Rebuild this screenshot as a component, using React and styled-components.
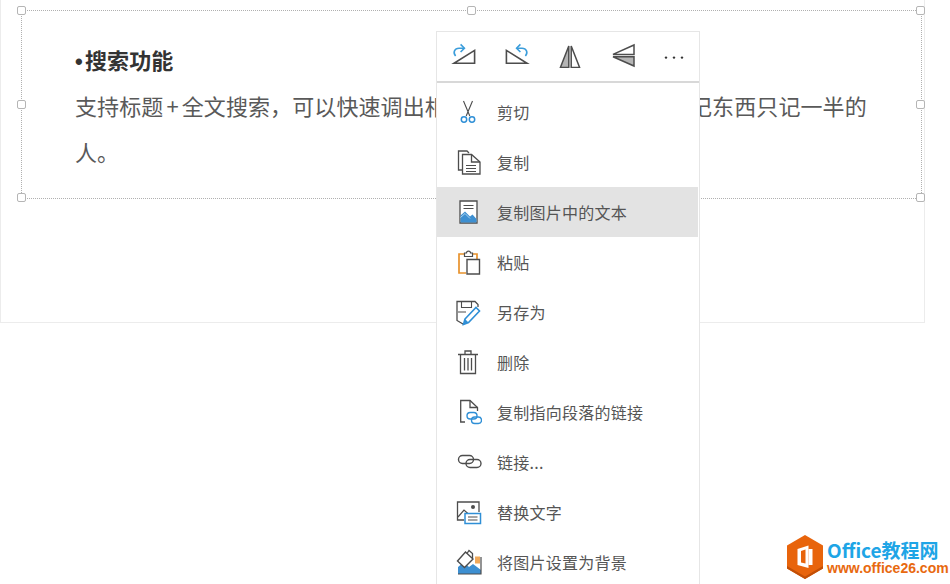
import React from "react";
import styled, { createGlobalStyle } from "styled-components";

const Global = createGlobalStyle`
  html, body {
    margin: 0;
    padding: 0;
    height: 100%;
    overflow: hidden;
    background: #fff;
  }
`;

const BLUE = "#2f8fd6";
const DARK = "#4d4d4d";

const Rotate = ({ flip }) => (
  <svg width="28" height="28" viewBox="0 0 28 28" fill="none" style={flip ? { transform: "scaleX(-1)" } : undefined}>
    <path d="M4 23.3H24.6V10.4Z" stroke={DARK} strokeWidth="1.6" fill="#fff" />
    <path d="M5.6 16C2.6 12.5 4.6 8.2 9 8.2H14.2" stroke="#3b9ddb" strokeWidth="1.6" />
    <path d="M10.6 4.4L14.4 8.2L10.6 12" stroke="#3b9ddb" strokeWidth="1.6" />
  </svg>
);

const FlipV = () => (
  <svg width="28" height="28" viewBox="0 0 28 28" fill="none">
    <path d="M12.8 6V27.5H4.4Z" fill="#b5b5b5" stroke={DARK} strokeWidth="1.5" />
    <path d="M15.2 6V27.5H23.6Z" fill="#fff" stroke={DARK} strokeWidth="1.5" />
  </svg>
);

const FlipH = () => (
  <svg width="28" height="28" viewBox="0 0 28 28" fill="none">
    <path d="M25 5V14.4H4Z" fill="#fff" stroke={DARK} strokeWidth="1.5" />
    <path d="M25 26V16.8H4Z" fill="#b5b5b5" stroke={DARK} strokeWidth="1.5" />
  </svg>
);

const Dots = () => (
  <svg width="28" height="28" viewBox="0 0 28 28" fill="#333">
    <circle cx="6" cy="17.6" r="1.2" />
    <circle cx="14" cy="17.6" r="1.2" />
    <circle cx="22" cy="17.6" r="1.2" />
  </svg>
);

const Scissors = () => (
  <svg width="28" height="28" viewBox="0 0 28 28" fill="none">
    <path d="M9.5 3L15.8 18M18.5 3L12.2 18" stroke={DARK} strokeWidth="1.1" />
    <circle cx="10" cy="21.5" r="2.7" stroke={BLUE} strokeWidth="1.5" />
    <circle cx="18" cy="21.5" r="2.7" stroke={BLUE} strokeWidth="1.5" />
  </svg>
);

const Copy = () => (
  <svg width="28" height="28" viewBox="0 0 28 28" fill="none" stroke={DARK} strokeWidth="1.3">
    <path d="M8 22H4.5V3H13L15 5" />
    <path d="M8.5 6.5H17.5L26 14V26H8.5Z" fill="#fff" />
    <path d="M17.5 6.5V14H26" />
    <path d="M12 17.5H22M12 20.5H22M12 23.5H22" strokeWidth="1" />
  </svg>
);

const PictureText = () => (
  <svg width="28" height="28" viewBox="0 0 28 28" fill="none">
    <path d="M6 3H23V25H6Z" fill="#fff" stroke={DARK} strokeWidth="1.3" />
    <path d="M9.5 7.5H19.5M9.5 10.5H19.5" stroke={DARK} strokeWidth="1" />
    <path d="M6.5 24.5V17.5L11 13.5L16 18.5L18.5 16.5L22.5 21V24.5Z" fill="#3d8fd1" />
    <path d="M6.5 19.5L11 15.5L16 20.5" stroke="#a9d2ef" strokeWidth="1" />
  </svg>
);

const Paste = () => (
  <svg width="28" height="28" viewBox="0 0 28 28" fill="none">
    <path d="M10 6H5V25H12M19 6H23V11" stroke="#e8922c" strokeWidth="1.7" />
    <path d="M10.5 7.5V5H12.5C12.5 2.4 16.5 2.4 16.5 5H18.5V8.5H10.5Z" fill="#fff" stroke={DARK} strokeWidth="1.2" />
    <path d="M13 11.5H25.5V26H13Z" fill="#fff" stroke={DARK} strokeWidth="1.4" />
  </svg>
);

const SaveAs = () => (
  <svg width="28" height="28" viewBox="0 0 28 28" fill="none">
    <path d="M13 23.5L9 26L3 22.5V3.5H21L24 6.5V9" stroke={DARK} strokeWidth="1.3" />
    <path d="M7.5 3.5V9.5H17.5V3.5M4 14H12" stroke={DARK} strokeWidth="1.1" />
    <path d="M11 21L22 9.5L25.5 13L14.5 24.5L9.5 26.5Z" fill="#fff" stroke={BLUE} strokeWidth="1.6" />
    <path d="M9.5 26.5L11 21L14.5 24.5Z" fill={BLUE} />
  </svg>
);

const Trash = () => (
  <svg width="28" height="28" viewBox="0 0 28 28" fill="none" stroke={DARK} strokeWidth="1.3">
    <path d="M4 6.5H24M11 6.5V3H17V6.5" />
    <path d="M6.5 6.5V25.5H21.5V6.5" />
    <path d="M10.5 10V22.5M14 10V22.5M17.5 10V22.5" />
  </svg>
);

const DocLink = () => (
  <svg width="28" height="28" viewBox="0 0 28 28" fill="none">
    <path d="M11 24H6.7V2.5H16L23.5 9.5V13" stroke={DARK} strokeWidth="1.3" />
    <path d="M16 2.5V9.5H23.5" stroke={DARK} strokeWidth="1.3" />
    <rect x="13" y="14.5" width="10" height="6.5" rx="3.2" stroke={BLUE} strokeWidth="1.4" />
    <rect x="17.5" y="19" width="10" height="6.5" rx="3.2" stroke={BLUE} strokeWidth="1.4" />
  </svg>
);

const LinkIcon = () => (
  <svg width="28" height="28" viewBox="0 0 28 28" fill="none" stroke={DARK} strokeWidth="1.4">
    <rect x="4.5" y="7.5" width="15" height="8" rx="4" />
    <rect x="12" y="11.5" width="15" height="8" rx="4" />
  </svg>
);

const AltText = () => (
  <svg width="28" height="28" viewBox="0 0 28 28" fill="none">
    <path d="M10 22H3.5V4H25V14" stroke={DARK} strokeWidth="1.3" />
    <path d="M4 19L10 12L15 16.5" stroke={DARK} strokeWidth="1.2" />
    <circle cx="19" cy="9" r="2" fill={DARK} />
    <path d="M11 15.5H26.5V25.5H11Z" fill="#fff" stroke={BLUE} strokeWidth="1.5" />
    <path d="M14 19H23.5M14 22H23.5" stroke={DARK} strokeWidth="1.1" />
  </svg>
);

const Background = () => (
  <svg width="28" height="28" viewBox="0 0 28 28" fill="none">
    <path d="M4 26V19L10 14L15 19L19 16L27 22V26Z" fill="#3d8fd1" />
    <path d="M4 26H27V9" stroke={DARK} strokeWidth="1.2" />
    <path d="M3.5 13L11.5 4L19 11L10.5 19.5Z" fill="#fff" stroke={DARK} strokeWidth="1.4" />
    <path d="M13 5.5L15 2.5L18.5 5.5V10" stroke={DARK} strokeWidth="1.3" />
    <rect x="21" y="8.5" width="5" height="7" fill="#f0a95b" />
  </svg>
);

const Hexagon = () => (
  <svg width="36" height="44" viewBox="0 0 36 44">
    <path d="M18 0L36 10.5V33.5L18 44L0 33.5V10.5Z" fill="#e8640c" />
    <path d="M18 44L36 33.5V31L18 41.5L0 31V33.5Z" fill="#c24f06" />
    <path d="M10.5 14L21.5 10.5V33L10.5 30Z" fill="#fff" />
    <path d="M21.5 14H25.5V30H21.5Z" fill="#fff" />
    <path d="M14 16L18.5 14.6V28.5L14 27.4Z" fill="#e8640c" />
  </svg>
);

const toolbarIcons = [<Rotate />, <Rotate flip />, <FlipV />, <FlipH />, <Dots />];

const items = [
  { label: "剪切", icon: <Scissors /> },
  { label: "复制", icon: <Copy /> },
  { label: "复制图片中的文本", icon: <PictureText />, active: true },
  { label: "粘贴", icon: <Paste /> },
  { label: "另存为", icon: <SaveAs /> },
  { label: "删除", icon: <Trash /> },
  { label: "复制指向段落的链接", icon: <DocLink /> },
  { label: "链接...", icon: <LinkIcon /> },
  { label: "替换文字", icon: <AltText /> },
  { label: "将图片设置为背景", icon: <Background /> },
];

const handles = [
  ["-5px", "-5px"],
  ["-5px", "calc(50% - 5px)"],
  ["-5px", "calc(100% - 5px)"],
  ["calc(50% - 5px)", "-5px"],
  ["calc(50% - 5px)", "calc(100% - 5px)"],
  ["calc(100% - 5px)", "-5px"],
  ["calc(100% - 5px)", "calc(50% - 5px)"],
  ["calc(100% - 5px)", "calc(100% - 5px)"],
];

const App = () => {
  return (
    <>
      <Global />
      <Screen>
        <Page>
          <Selection>
            {handles.map(([top, left], i) => (
              <Handle key={i} $top={top} $left={left} />
            ))}
            <Title>
              <Bullet>•</Bullet>搜索功能
            </Title>
            <div>
              支持标题<Plus>+</Plus>全文搜索，可以快速调出相关笔记内容，很适合那些记东西只记一半的人。
            </div>
          </Selection>
        </Page>

        <Menu>
          <Toolbar>
            {toolbarIcons.map((icon, i) => (
              <ToolButton key={i}>{icon}</ToolButton>
            ))}
          </Toolbar>
          <List>
            {items.map((item) => (
              <Item key={item.label} $active={item.active}>
                <ItemIcon>{item.icon}</ItemIcon>
                {item.label}
              </Item>
            ))}
          </List>
        </Menu>

        <Logo>
          <Hexagon />
          <LogoText>
            <LogoName>Office教程网</LogoName>
            <LogoUrl>www.office26.com</LogoUrl>
          </LogoText>
        </Logo>
      </Screen>
    </>
  );
};

const Screen = styled.div`
  position: relative;
  width: 950px;
  height: 584px;
  overflow: hidden;
  font-family: "Noto Sans CJK SC", "Noto Sans", sans-serif;
`;

const Page = styled.div`
  box-sizing: border-box;
  width: 925px;
  height: 323px;
  padding: 10px 0 0 20px;
  border: 1px solid #ececec;
  border-top: none;
`;

const Selection = styled.div`
  position: relative;
  box-sizing: border-box;
  width: 901px;
  height: 189px;
  padding: 25px 50px 0 53px;
  border: 1px dotted #b0b0b0;
  font-size: 22px;
  line-height: 46px;
  letter-spacing: 0.1px;
  color: #595959;
`;

const Handle = styled.span`
  position: absolute;
  top: ${(p) => p.$top};
  left: ${(p) => p.$left};
  box-sizing: border-box;
  width: 9px;
  height: 9px;
  background: #fff;
  border: 1px solid #b5b5b5;
  border-radius: 2px;
`;

const Title = styled.div`
  height: 46px;
  font-weight: 700;
  color: #333;
`;

const Bullet = styled.span`
  display: inline-block;
  width: 10px;
  line-height: 1;
  font-family: "Liberation Sans", Arial, sans-serif;
`;

const Plus = styled.span`
  padding: 0 3px;
`;

const Menu = styled.div`
  position: absolute;
  top: 31px;
  left: 436px;
  box-sizing: border-box;
  width: 264px;
  background: #fff;
  border: 1px solid #e6e6e6;
`;

const Toolbar = styled.div`
  display: grid;
  grid-template-columns: repeat(4, 53px) 1fr;
  height: 49px;
  border-bottom: 2px solid #d8d8d8;
`;

const ToolButton = styled.div`
  display: flex;
  align-items: center;
  justify-content: center;
  padding-bottom: 6px;
`;

const List = styled.div`
  display: flex;
  flex-direction: column;
  padding-top: 4px;
`;

const Item = styled.div`
  display: flex;
  align-items: center;
  gap: 9px;
  height: 50px;
  padding-left: 11px;
  margin-right: 1px;
  font-size: 16px;
  letter-spacing: 0.25px;
  color: #555;
  background: ${(p) => (p.$active ? "#e3e3e3" : "transparent")};
`;

const ItemIcon = styled.span`
  display: flex;
  align-items: center;
  justify-content: center;
  width: 40px;
  height: 28px;
`;

const Logo = styled.div`
  position: absolute;
  left: 787px;
  top: 535px;
  display: flex;
  align-items: center;
  gap: 4px;
`;

const LogoText = styled.div`
  display: flex;
  flex-direction: column;
`;

const LogoName = styled.div`
  font-size: 19px;
  line-height: 22px;
  font-weight: 700;
  color: #1ea5e6;
  white-space: nowrap;
`;

const LogoUrl = styled.div`
  font-family: "Liberation Sans", Arial, sans-serif;
  font-size: 14px;
  line-height: 15px;
  font-weight: 700;
  color: #e8690f;
  white-space: nowrap;
`;

export default App;
